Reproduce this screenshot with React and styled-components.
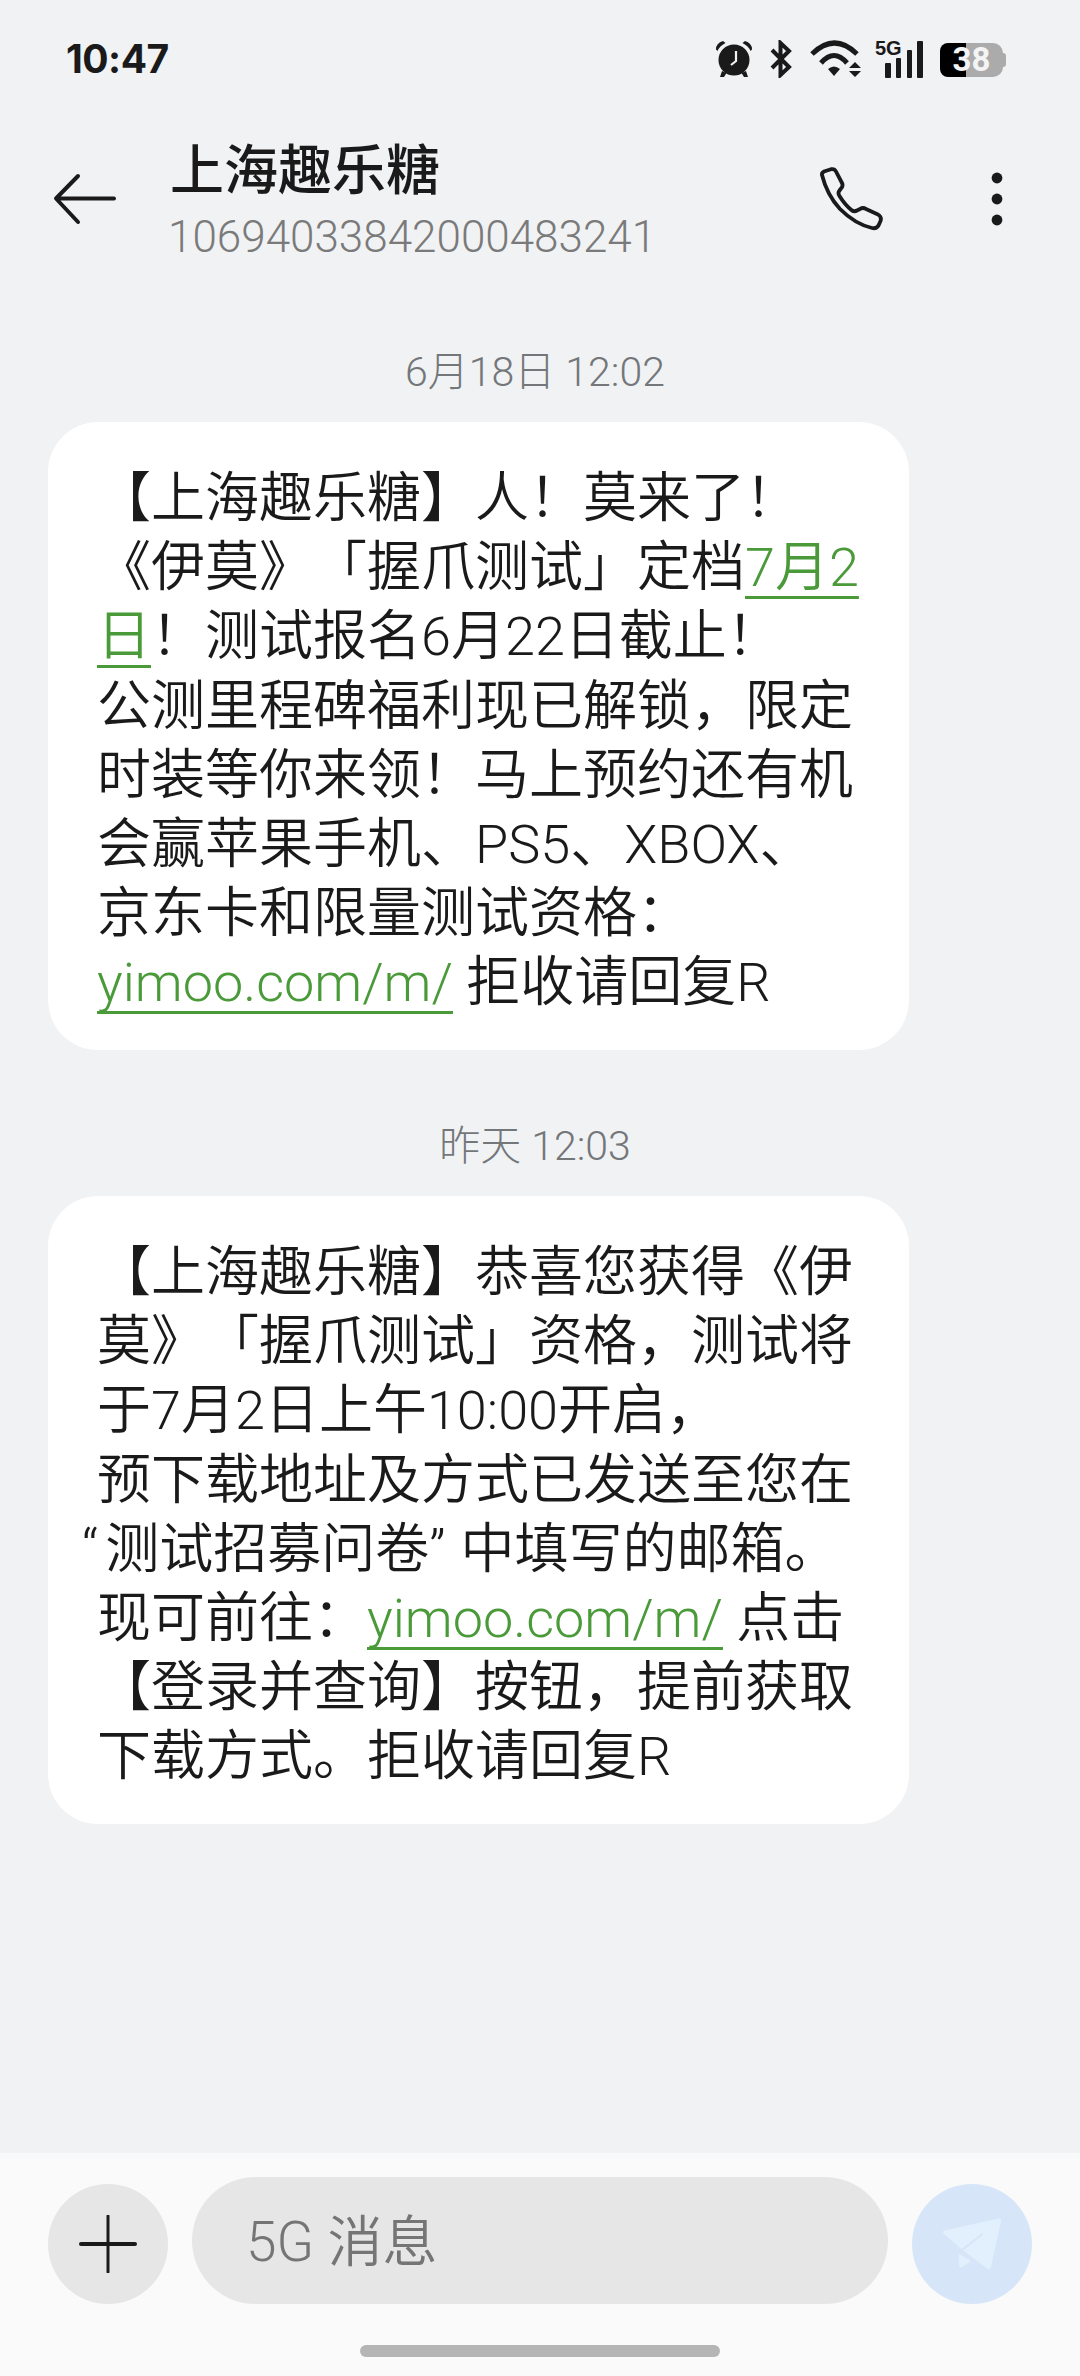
import React from 'react';
import styled, { createGlobalStyle } from 'styled-components';

const GlobalStyle = createGlobalStyle`
  html, body {
    margin: 0;
    padding: 0;
    background: #f1f2f4;
  }
  body {
    font-family: Roboto, "Noto Sans CJK SC", sans-serif;
    text-spacing-trim: space-all;
  }
`;

const Page = styled.div`
  width: 1080px;
  height: 2376px;
  display: flex;
  flex-direction: column;
  background: #f1f2f4;
  overflow: hidden;
`;

// --- status bar ---

const StatusBar = styled.div`
  height: 116px;
  padding: 35px 77px 0 66px;
  box-sizing: border-box;
  display: flex;
  justify-content: space-between;
  align-items: flex-start;
`;

const Clock = styled.span`
  font-family: Inter, sans-serif;
  font-size: 39px;
  line-height: 48px;
  font-weight: 700;
  letter-spacing: -0.5px;
  color: #1a1a1a;
`;

const StatusIcons = styled.div`
  display: flex;
  align-items: flex-start;
  margin-top: 5px;
`;

const SignalWrap = styled.div`
  position: relative;
  width: 48px;
  height: 38px;
  margin-left: 13px;
`;

const FiveG = styled.span`
  position: absolute;
  left: 0;
  top: -1px;
  font-family: "Liberation Sans Narrow", "Liberation Sans", sans-serif;
  font-size: 20px;
  line-height: 18px;
  font-weight: 700;
  color: #1a1a1a;
`;

const Battery = styled.div`
  position: relative;
  width: 63px;
  height: 34px;
  margin-left: 17px;
  margin-top: 3px;
  border-radius: 8px 10px 10px 8px;
  background: linear-gradient(to right, #000 26px, #ababab 26px);
  font-size: 33px;
  line-height: 34px;
  font-weight: 700;
  color: #f4f4f4;
  text-align: center;
  &::after {
    content: '';
    position: absolute;
    right: -3px;
    top: 10px;
    width: 3px;
    height: 14px;
    border-radius: 0 4px 4px 0;
    background: #ababab;
  }
`;

// --- conversation header ---

const NavBar = styled.div`
  display: flex;
  align-items: flex-start;
  height: 145px;
  padding-left: 52px;
`;

const BackButton = styled.div`
  width: 64px;
  margin-top: 57px;
  margin-right: 54px;
  display: flex;
`;

const Contact = styled.div`
  flex: 1;
  display: flex;
  flex-direction: column;
`;

const ContactName = styled.div`
  font-size: 54px;
  line-height: 64px;
  font-weight: 500;
  color: #1a1a1a;
  margin-top: 24px;
`;

const ContactNumber = styled.div`
  font-size: 44px;
  line-height: 50px;
  font-weight: 300;
  color: #7a7a7a;
  margin-top: 8px;
  margin-left: -2px;
`;

const NavActions = styled.div`
  display: flex;
  align-items: center;
  margin-top: 51px;
  padding-right: 77px;
  gap: 107px;
`;

// --- messages ---

const Thread = styled.div`
  flex: 1;
  display: flex;
  flex-direction: column;
  align-items: flex-start;
  padding: 0 48px;
`;

const Stamp = styled.div`
  width: 974px;
  text-align: center;
  font-size: 41px;
  line-height: 48px;
  font-weight: 300;
  color: #74777a;
  margin-top: ${p => p.$top}px;
  margin-bottom: 26px;
`;

const Bubble = styled.div`
  width: 861px;
  height: 628px;
  box-sizing: border-box;
  padding: 42px 30px 0 49px;
  background: #ffffff;
  border-radius: 50px;
  font-size: 54px;
  line-height: 69.2px;
  font-weight: 350;
  color: #1a1a1a;
  white-space: nowrap;
`;

const Line = styled.div`
  height: 69.2px;
`;

const Link = styled.span`
  color: #4a9a3a;
  text-decoration: underline;
  text-decoration-thickness: 3px;
  text-underline-offset: 10px;
  text-decoration-skip-ink: none;
`;

const Quote = styled.span`
  margin-left: ${p => p.$before}px;
  margin-right: ${p => p.$after}px;
`;

// --- composer ---

const Composer = styled.div`
  height: 223px;
  box-sizing: border-box;
  background: #fafafa;
  border-top: 5px solid #f8f9fa;
  display: flex;
  flex-direction: column;
  align-items: center;
`;

const ComposerRow = styled.div`
  width: 984px;
  height: 127px;
  margin-top: 19px;
  display: flex;
  align-items: flex-end;
  gap: 24px;
`;

const RoundButton = styled.div`
  width: 120px;
  height: 120px;
  flex: none;
  border-radius: 50%;
  background: ${p => p.$bg};
  display: flex;
  align-items: center;
  justify-content: center;
`;

const Input = styled.div`
  flex: 1;
  height: 127px;
  box-sizing: border-box;
  padding: 4px 0 0 54px;
  border-radius: 64px;
  background: #e6e6e6;
  font-size: 55px;
  line-height: 123px;
  font-weight: 350;
  color: #757575;
`;

const HomeBar = styled.div`
  width: 360px;
  height: 12px;
  margin-top: 41px;
  border-radius: 6px;
  background: #b5b5b5;
`;

// --- icons ---

const AlarmIcon = () => (
  <svg width="38" height="38" viewBox="0 0 38 38">
    <path d="M1 9.5 Q1 3 8 1 L10.5 3 Q4.5 6 2.5 11 Z M37 9.5 Q37 3 30 1 L27.5 3 Q33.5 6 35.5 11 Z" fill="#1a1a1a" />
    <circle cx="19" cy="20" r="15.5" fill="#1a1a1a" />
    <path d="M7 31 L5 37 L9 37 L11.5 33 Z M31 31 L33 37 L29 37 L26.5 33 Z" fill="#1a1a1a" />
    <path d="M21 11 V21 L16 25" fill="none" stroke="#f1f2f4" strokeWidth="2.2" />
  </svg>
);

const BluetoothIcon = () => (
  <svg width="22" height="38" viewBox="0 0 22 38" style={{ marginLeft: 17 }}>
    <path d="M2 10 L19 27 L10.5 35 V3 L19 11 L2 28" fill="none" stroke="#1a1a1a" strokeWidth="4" />
  </svg>
);

const WifiIcon = () => (
  <svg width="52" height="38" viewBox="0 0 52 38" style={{ marginLeft: 18 }}>
    <path d="M2 14 Q24.5 -8 47 14" fill="none" stroke="#1a1a1a" strokeWidth="5" />
    <path d="M11 23 Q24 8 37 23" fill="none" stroke="#1a1a1a" strokeWidth="5" />
    <path d="M18 29 Q24 24 30 29 L24 36 Z" fill="#1a1a1a" />
    <path d="M45 22 L51 28 H39 Z M39 31 H51 L45 37 Z" fill="#1a1a1a" />
  </svg>
);

const SignalBars = () => (
  <svg width="38" height="38" viewBox="0 0 38 38" style={{ position: 'absolute', left: 10, top: 0 }}>
    <rect x="0" y="23" width="6" height="15" rx="1" fill="#1a1a1a" />
    <rect x="11" y="18" width="5" height="20" rx="1" fill="#1a1a1a" />
    <rect x="22" y="10" width="5" height="28" rx="1" fill="#1a1a1a" />
    <rect x="32" y="1" width="6" height="37" rx="1" fill="#1a1a1a" />
  </svg>
);

const ArrowIcon = () => (
  <svg width="64" height="52" viewBox="0 0 64 52">
    <path d="M62 25.5 H5 M26 3 L4 25.5 L26 49" fill="none" stroke="#1a1a1a" strokeWidth="4" strokeLinecap="round" strokeLinejoin="round" />
  </svg>
);

const PhoneIcon = () => (
  <svg width="65" height="64" viewBox="0 0 65 64">
    <path
      d="M3 8 Q2.5 6 5 4.5 L12 2.2 Q15.5 1.5 17 4.5 L23 16 Q24.5 19 22 21.5 L20.5 23.5 Q18.5 26 20.5 29 Q26 38 33 43.5 Q35.5 45 38 43.5 L41 42 Q44 40 47 42 L59 47.5 Q63 50 61.5 54 L59.5 58.5 Q57.5 62 53 61 Q36 57 21 42 Q8 28 3 8 Z"
      fill="none"
      stroke="#1a1a1a"
      strokeWidth="3.8"
      strokeLinejoin="round"
    />
  </svg>
);

const MoreIcon = () => (
  <svg width="12" height="54" viewBox="0 0 12 54">
    <circle cx="6" cy="6" r="5.4" fill="#1a1a1a" />
    <circle cx="6" cy="27" r="5.4" fill="#1a1a1a" />
    <circle cx="6" cy="48" r="5.4" fill="#1a1a1a" />
  </svg>
);

const PlusIcon = () => (
  <svg width="58" height="58" viewBox="0 0 58 58">
    <path d="M29 1 V57" stroke="#1a1a1a" strokeWidth="3" strokeLinecap="round" />
    <path d="M2 29 H56" stroke="#1a1a1a" strokeWidth="4" strokeLinecap="round" />
  </svg>
);

const SendIcon = () => (
  <svg width="62" height="54" viewBox="0 0 62 54">
    <path d="M3 17 Q0.5 14.5 3.5 13.5 L57 1.5 Q60.5 1 60 4 L50 50 Q49 53.5 46 51.5 L21.5 33 Z" fill="#e2effc" />
    <path d="M41.7 16.7 L21 33" stroke="#d6e6f8" strokeWidth="2" />
    <path d="M17.7 36.7 L30 44 L21 50 Q18 51.5 18 48 Z" fill="#e2effc" />
  </svg>
);

const firstMessage = [
  <>【上海趣乐糖】人！莫来了！</>,
  <>《伊莫》「握爪测试」定档<Link>7月2</Link></>,
  <><Link>日</Link>！测试报名6月22日截止！</>,
  <>公测里程碑福利现已解锁，限定</>,
  <>时装等你来领！马上预约还有机</>,
  <>会赢苹果手机、PS5、XBOX、</>,
  <>京东卡和限量测试资格：</>,
  <><Link>yimoo.com/m/</Link> 拒收请回复R</>,
];

const secondMessage = [
  <>【上海趣乐糖】恭喜您获得《伊</>,
  <>莫》「握爪测试」资格，测试将</>,
  <>于7月2日上午10:00开启，</>,
  <>预下载地址及方式已发送至您在</>,
  <><Quote $before={-15} $after={7}>“</Quote>测试招募问卷<Quote $before={0} $after={15}>”</Quote>中填写的邮箱。</>,
  <>现可前往：<Link>yimoo.com/m/</Link> 点击</>,
  <>【登录并查询】按钮，提前获取</>,
  <>下载方式。拒收请回复R</>,
];

const Message = ({ lines }) => (
  <Bubble>
    {lines.map((line, i) => <Line key={i}>{line}</Line>)}
  </Bubble>
);

export default function App() {
  return (
    <Page>
      <GlobalStyle />

      <StatusBar>
        <Clock>10:47</Clock>
        <StatusIcons>
          <AlarmIcon />
          <BluetoothIcon />
          <WifiIcon />
          <SignalWrap>
            <FiveG>5G</FiveG>
            <SignalBars />
          </SignalWrap>
          <Battery>38</Battery>
        </StatusIcons>
      </StatusBar>

      <NavBar>
        <BackButton><ArrowIcon /></BackButton>
        <Contact>
          <ContactName>上海趣乐糖</ContactName>
          <ContactNumber>10694033842000483241</ContactNumber>
        </Contact>
        <NavActions>
          <PhoneIcon />
          <MoreIcon />
        </NavActions>
      </NavBar>

      <Thread>
        <Stamp $top={87}>6月18日 12:02</Stamp>
        <Message lines={firstMessage} />
        <Stamp $top={72}>昨天 12:03</Stamp>
        <Message lines={secondMessage} />
      </Thread>

      <Composer>
        <ComposerRow>
          <RoundButton $bg="#e6e6e6"><PlusIcon /></RoundButton>
          <Input>5G 消息</Input>
          <RoundButton $bg="#d6e6f8"><SendIcon /></RoundButton>
        </ComposerRow>
        <HomeBar />
      </Composer>
    </Page>
  );
}
